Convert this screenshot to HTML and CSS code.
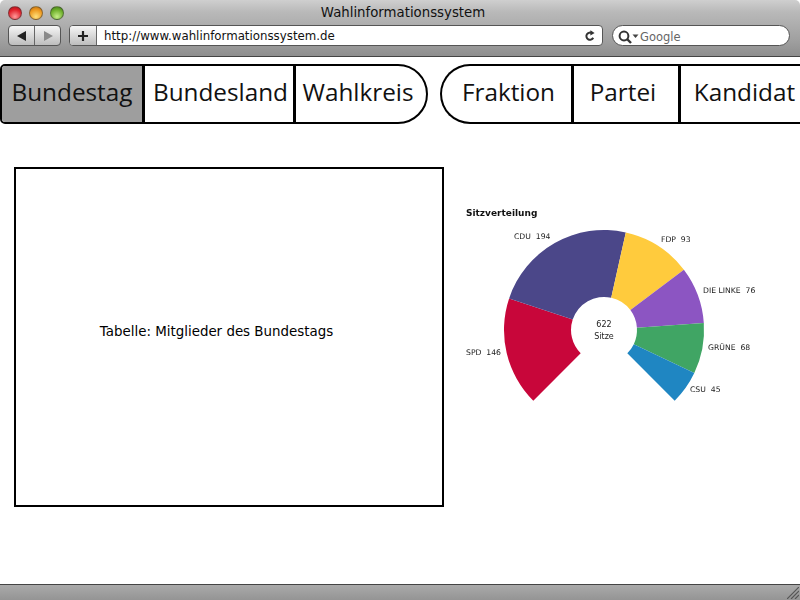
FILE: index.html
```html
<!DOCTYPE html>
<html lang="de">
<head>
  <meta charset="UTF-8">
  <title>Wahlinformationssystem</title>
  <link rel="stylesheet" href="styles.css">
</head>
<body>
  <div class="browser">
    <header class="chrome">
      <div class="titlebar">
        <div class="lights">
          <span class="light red"></span>
          <span class="light orange"></span>
          <span class="light green"></span>
        </div>
        <div class="title">Wahlinformationssystem</div>
      </div>
      <div class="toolbar">
        <div class="nav-buttons">
          <button class="tool-btn" type="button">
            <svg width="12" height="12" viewBox="0 0 12 12"><path d="M1 6 L10 1 V11 Z" fill="#222"/></svg>
          </button>
          <button class="tool-btn" type="button">
            <svg width="12" height="12" viewBox="0 0 12 12"><path d="M11 6 L2 1 V11 Z" fill="#8a8a8a"/></svg>
          </button>
        </div>
        <div class="address">
          <button class="add-btn" type="button">
            <svg width="12" height="12" viewBox="0 0 12 12"><path d="M6 1 V11 M1 6 H11" stroke="#222" stroke-width="2.2"/></svg>
          </button>
          <div class="url">http://www.wahlinformationssystem.de</div>
          <svg class="reload" width="12" height="12" viewBox="0 0 12 12"><path d="M9.2 7.8 A3.6 3.6 0 1 1 8 3.2" fill="none" stroke="#333" stroke-width="2"/><path d="M6.4 0.2 L10.6 3 L6.4 5.6 Z" fill="#333"/></svg>
        </div>
        <div class="search">
          <svg width="22" height="14" viewBox="0 0 22 14"><circle cx="6" cy="6" r="4.4" fill="none" stroke="#333" stroke-width="2"/><path d="M9 9 L13 13" stroke="#333" stroke-width="2.4"/><path d="M14.5 4.5 H20.5 L17.5 8 Z" fill="#444"/></svg>
          <span>Google</span>
        </div>
      </div>
    </header>

    <main class="page">
      <nav class="tabs">
        <div class="tab-group left">
          <a class="tab active tab-bundestag">Bundestag</a>
          <a class="tab tab-bundesland">Bundesland</a>
          <a class="tab tab-wahlkreis">Wahlkreis</a>
        </div>
        <div class="tab-group right">
          <a class="tab tab-fraktion">Fraktion</a>
          <a class="tab tab-partei">Partei</a>
          <a class="tab tab-kandidat">Kandidat</a>
        </div>
      </nav>

      <section class="content">
        <div class="table-box">Tabelle: Mitglieder des Bundestags</div>
        <svg class="chart" width="340" height="220" viewBox="-154 -136 340 220">
          <text class="chart-title" x="-138" y="-114">Sitzverteilung</text>
          <path fill="#c8063a" d="M-70.7 70.7 A100 100 0 0 1 -94.9 -31.6 L-31.3 -10.4 A33 33 0 0 0 -23.3 23.3 Z"/>
          <path fill="#4b4789" d="M-94.9 -31.6 A100 100 0 0 1 21.8 -97.6 L7.2 -32.2 A33 33 0 0 0 -31.3 -10.4 Z"/>
          <path fill="#ffcb3d" d="M21.8 -97.6 A100 100 0 0 1 79.9 -60.2 L26.4 -19.9 A33 33 0 0 0 7.2 -32.2 Z"/>
          <path fill="#8c55c2" d="M79.9 -60.2 A100 100 0 0 1 99.8 -7 L32.9 -2.3 A33 33 0 0 0 26.4 -19.9 Z"/>
          <path fill="#40a564" d="M99.8 -7 A100 100 0 0 1 90.3 43 L29.8 14.2 A33 33 0 0 0 32.9 -2.3 Z"/>
          <path fill="#1f86c2" d="M90.3 43 A100 100 0 0 1 70.7 70.7 L23.3 23.3 A33 33 0 0 0 29.8 14.2 Z"/>
          <text class="chart-label" x="-90" y="-91">CDU&#160; 194</text>
          <text class="chart-label" x="57" y="-88">FDP&#160; 93</text>
          <text class="chart-label" x="99" y="-37">DIE LINKE&#160; 76</text>
          <text class="chart-label" x="104" y="20">GRÜNE&#160; 68</text>
          <text class="chart-label" x="86" y="62">CSU&#160; 45</text>
          <text class="chart-label" x="-138" y="25">SPD&#160; 146</text>
          <text class="chart-center" x="0" y="-3">622</text>
          <text class="chart-center" x="0" y="9">Sitze</text>
        </svg>
      </section>
    </main>

    <footer class="statusbar">
      <svg class="grip" width="12" height="12" viewBox="0 0 12 12"><path d="M0 12 L12 0 M4 12 L12 4 M8 12 L12 8" stroke="#555" stroke-width="1.2"/></svg>
    </footer>
  </div>
</body>
</html>
```

FILE: styles.css
```css
html, body {
  margin: 0;
  padding: 0;
  height: 100%;
  overflow: hidden;
}
body {
  font-family: "DejaVu Sans", sans-serif;
  background: #fff;
  color: #000;
}
.browser {
  display: flex;
  flex-direction: column;
  height: 600px;
  width: 800px;
}

/* window chrome */
.chrome {
  height: 57px;
  box-sizing: border-box;
  flex: none;
  background: linear-gradient(to bottom, #cfcfcf 0, #b9b9b9 12px, #a0a0a0 40px, #8f8f8f 55px);
  border-bottom: 1px solid #444;
  border-radius: 5px 5px 0 0;
}
.titlebar {
  display: flex;
  align-items: center;
  height: 25px;
  box-sizing: border-box;
  position: relative;
}
.lights {
  display: flex;
  gap: 7px;
  margin-left: 8px;
}
.light {
  width: 14px;
  height: 14px;
  border-radius: 50%;
  border: 1px solid rgba(60, 60, 60, .55);
  box-sizing: border-box;
}
.light.red { background: radial-gradient(circle at 50% 80%, #ff9a9a, #e2222c 60%, #a81018); }
.light.orange { background: radial-gradient(circle at 50% 80%, #ffe07a, #ee9a20 60%, #b8690c); }
.light.green { background: radial-gradient(circle at 50% 80%, #c6ee88, #6fb02c 60%, #3e7a14); }
.title {
  position: absolute;
  left: 6px;
  right: 0;
  top: 5px;
  text-align: center;
  font-size: 13.3px;
  color: #111;
}
.toolbar {
  display: flex;
  align-items: center;
  height: 21px;
  padding-left: 8px;
}
.nav-buttons {
  display: flex;
  width: 53px;
  height: 21px;
  box-sizing: border-box;
  border: 1px solid #555;
  border-radius: 4px;
  overflow: hidden;
  background: linear-gradient(to bottom, #f6f6f6, #bdbdbd);
}
.tool-btn {
  flex: 1;
  padding: 0;
  border: 0;
  background: none;
  display: flex;
  align-items: center;
  justify-content: center;
}
.tool-btn + .tool-btn {
  border-left: 1px solid #666;
}
.address {
  display: flex;
  align-items: center;
  width: 534px;
  height: 21px;
  margin-left: 8px;
  box-sizing: border-box;
  border: 1px solid #555;
  border-radius: 4px;
  background: #fff;
  overflow: hidden;
}
.add-btn {
  width: 27px;
  height: 100%;
  padding: 0;
  border: 0;
  border-right: 1px solid #666;
  background: linear-gradient(to bottom, #f6f6f6, #bdbdbd);
  display: flex;
  align-items: center;
  justify-content: center;
  flex: none;
}
.url {
  flex: 1;
  padding-left: 7px;
  font-size: 11.8px;
  color: #111;
}
.reload {
  margin-right: 6px;
}
.search {
  display: flex;
  align-items: center;
  gap: 0;
  width: 178px;
  height: 21px;
  margin-left: 9px;
  padding: 2px 0 0 5px;
  box-sizing: border-box;
  border: 1px solid #555;
  border-radius: 11px;
  background: #fff;
  font-size: 11.5px;
  color: #666;
}

/* page */
.page {
  flex: 1;
  min-height: 0;
  overflow: hidden;
}
.tabs {
  display: flex;
  justify-content: space-between;
  margin-top: 7px;
  width: 800px;
}
.tab-group {
  display: flex;
  height: 60px;
  box-sizing: border-box;
  border: 2px solid #000;
}
.tab-group.left {
  width: 428px;
  border-radius: 5px 30px 30px 5px;
  overflow: hidden;
}
.tab-group.right {
  width: 370px;
  margin-right: -10px;
  border-right: 0;
  border-radius: 30px 0 0 30px;
}
.tab {
  display: flex;
  align-items: center;
  justify-content: center;
  box-sizing: border-box;
  padding-bottom: 5px;
  font-family: "Open Sans", sans-serif;
  font-size: 24.3px;
  color: #111;
  white-space: nowrap;
}
.tab + .tab {
  border-left: 3px solid #000;
}
.tab.active {
  background: #9e9e9e;
}
.tab-bundestag { width: 140px; }
.tab-bundesland { width: 151px; padding-left: 3px; }
.tab-wahlkreis { flex: 1; padding-right: 6px; }
.tab-fraktion { width: 129px; padding-left: 4px; }
.tab-partei { width: 107px; padding-right: 6px; }
.tab-kandidat { width: 132px; padding-left: 6px; padding-right: 8px; }

.content {
  display: flex;
  align-items: flex-start;
  padding: 43px 0 0 14px;
}
.table-box {
  display: flex;
  align-items: center;
  justify-content: center;
  width: 430px;
  height: 340px;
  flex: none;
  box-sizing: border-box;
  padding: 0 25px 12px 0;
  border: 2px solid #000;
  font-size: 13.4px;
}
.chart {
  flex: none;
  margin: 27px 0 0 6px;
  filter: blur(.3px);
}
.chart-title {
  font-size: 9px;
  font-weight: bold;
  fill: #111;
}
.chart-label {
  font-size: 7.7px;
  fill: #222;
}
.chart-center {
  font-size: 8px;
  fill: #222;
  text-anchor: middle;
}

.statusbar {
  flex: none;
  height: 16px;
  box-sizing: border-box;
  border-top: 1px solid #444;
  background: linear-gradient(to bottom, #aaa, #949494);
  display: flex;
  justify-content: flex-end;
  align-items: flex-end;
}
.grip {
  margin: 0 1px 1px 0;
}
```
